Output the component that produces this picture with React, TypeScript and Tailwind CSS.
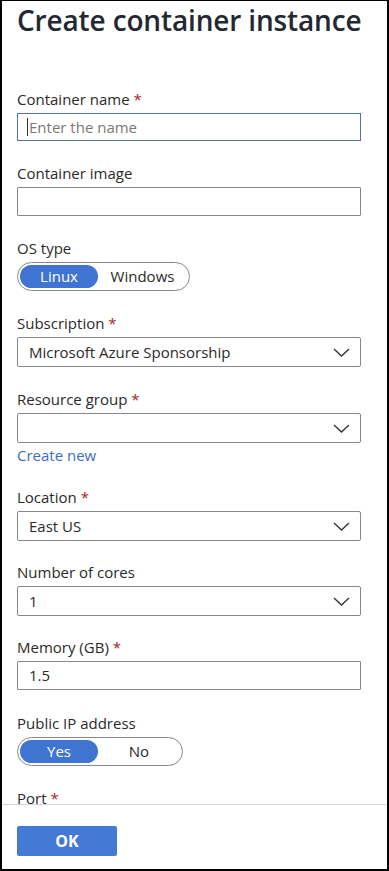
import React from "react";

const font = { fontFamily: '"Open Sans", "Noto Sans", Arial, sans-serif' };

function Label({ text, required }: { text: string; required?: boolean }) {
    return (
        <div className="text-[15px] leading-5 text-[#2b2a29] mb-[4px]">
            {text}
            {required && <span className="text-[#a4262c]"> *</span>}
        </div>
    );
}

function Chevron() {
    return (
        <svg width="17" height="9" viewBox="0 0 17 9" fill="none" className="shrink-0">
            <path d="M1 1 L8.5 8 L16 1" stroke="#323130" strokeWidth="1.3" />
        </svg>
    );
}

function Select({ value }: { value?: string }) {
    return (
        <div className="h-[30px] w-[344px] border border-[#8a8886] rounded-[2px] flex items-center justify-between pl-[11px] pr-[10px] text-[15px] text-[#2b2a29]">
            <span>{value}</span>
            <Chevron />
        </div>
    );
}

function TextBox({ value }: { value?: string }) {
    return (
        <div className="h-[29px] w-[344px] border border-[#8a8886] rounded-[1px] flex items-center pl-[11px] text-[15px] text-[#2b2a29]">
            {value}
        </div>
    );
}

function Toggle({ on, off, offWidth }: { on: string; off: string; offWidth: string }) {
    return (
        <div className="inline-flex items-center h-[29px] rounded-full border border-[#8a8886] p-[2px] text-[15px]">
            <div className="w-[78px] h-[23px] rounded-full bg-[#3f74d3] text-white flex items-center justify-center">
                {on}
            </div>
            <div className={`${offWidth} h-[23px] flex items-center justify-center text-[#2b2a29]`}>{off}</div>
        </div>
    );
}

export default function App() {
    return (
        <div
            style={font}
            className="w-[389px] h-[871px] bg-white border-t border-l-2 border-r-2 border-b-2 border-black flex flex-col overflow-hidden"
        >
            {/* Scrolled form area */}
            <div className="flex-1 overflow-hidden pl-[15px] pt-[2px]">
                <h1 className="text-[28px] leading-[34px] font-semibold text-[#232833] tracking-[-0.15px]">
                    Create container instance
                </h1>

                <div className="mt-[52px]">
                    <div className="mb-[22px]">
                        <Label text="Container name" required />
                        <div className="h-[28px] w-[344px] border border-[#52769a] flex items-center pl-[9px] text-[15px]">
                            <span className="w-px h-[18px] bg-[#323130] mr-px" />
                            <span className="text-[#7a7876]">Enter the name</span>
                        </div>
                    </div>

                    <div className="mb-[22px]">
                        <Label text="Container image" />
                        <TextBox />
                    </div>

                    <div className="mb-[22px]">
                        <Label text="OS type" />
                        <Toggle on="Linux" off="Windows" offWidth="w-[89px]" />
                    </div>

                    <div className="mb-[22px]">
                        <Label text="Subscription" required />
                        <Select value="Microsoft Azure Sponsorship" />
                    </div>

                    <div className="mb-[22px]">
                        <Label text="Resource group" required />
                        <Select />
                        <div className="mt-[2px] text-[15px] leading-5 text-[#3d6cc4]">Create new</div>
                    </div>

                    <div className="mb-[21px]">
                        <Label text="Location" required />
                        <Select value="East US" />
                    </div>

                    <div className="mb-[21px]">
                        <Label text="Number of cores" />
                        <Select value="1" />
                    </div>

                    <div className="mb-[23px]">
                        <Label text="Memory (GB)" required />
                        <TextBox value="1.5" />
                    </div>

                    <div className="mb-[22px]">
                        <Label text="Public IP address" />
                        <Toggle on="Yes" off="No" offWidth="w-[82px]" />
                    </div>

                    <div>
                        <Label text="Port" required />
                    </div>
                </div>
            </div>

            {/* Footer */}
            <div className="h-[65px] shrink-0 border-t border-[#d6d3d8] pl-[15px] pt-[21px]">
                <button className="w-[100px] h-[30px] rounded-[2px] bg-[#4579d6] text-white text-[16px] font-bold">
                    OK
                </button>
            </div>
        </div>
    );
}
